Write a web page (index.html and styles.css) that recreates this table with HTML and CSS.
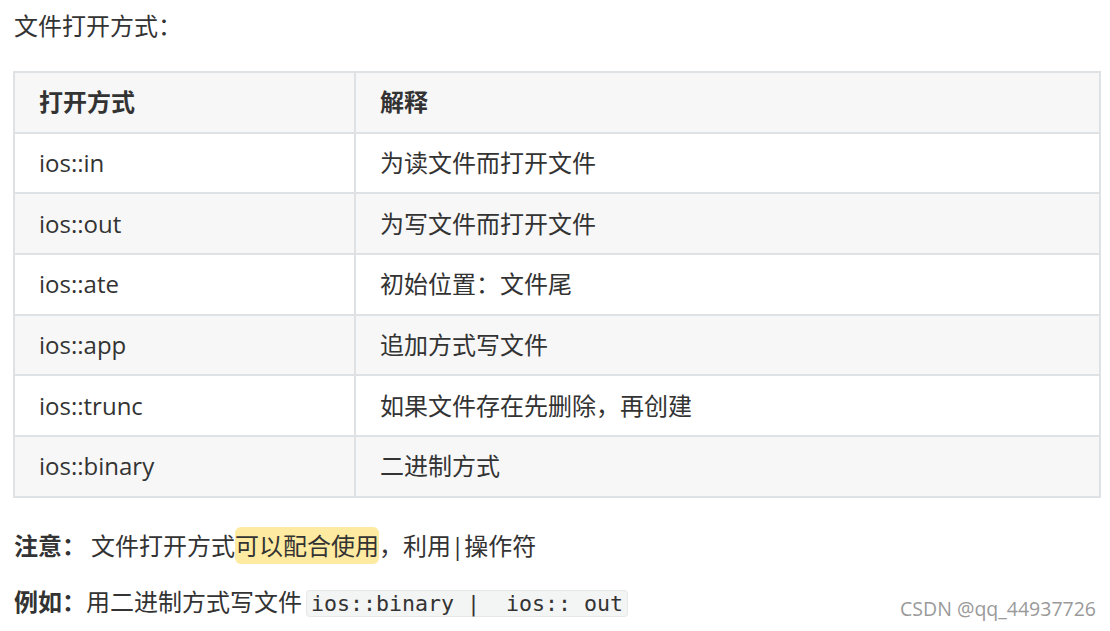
FILE: index.html
```html
<!DOCTYPE html>
<html lang="zh-CN">
<head>
<meta charset="utf-8">
<title>文件打开方式</title>
<link rel="stylesheet" href="styles.css">
</head>
<body>
<div class="article">
  <p class="intro">文件打开方式：</p>
  <table class="modes">
    <thead>
      <tr><th class="c1">打开方式</th><th class="c2">解释</th></tr>
    </thead>
    <tbody>
      <tr><td>ios::in</td><td>为读文件而打开文件</td></tr>
      <tr class="alt"><td>ios::out</td><td>为写文件而打开文件</td></tr>
      <tr><td>ios::ate</td><td>初始位置：文件尾</td></tr>
      <tr class="alt"><td>ios::app</td><td>追加方式写文件</td></tr>
      <tr><td>ios::trunc</td><td>如果文件存在先删除，再创建</td></tr>
      <tr class="alt"><td>ios::binary</td><td>二进制方式</td></tr>
    </tbody>
  </table>
  <p class="note"><strong>注意：</strong><span class="gap"> </span>文件打开方式<mark class="hl">可以配合使用</mark>，利用|操作符</p>
  <p class="note"><strong>例如：</strong>用二进制方式写文件<code class="inline">ios::binary |  ios:: out</code></p>
  <div class="watermark">CSDN @qq_44937726</div>
</div>
</body>
</html>
```
FILE: styles.css
```css
html, body {
  margin: 0;
  padding: 0;
  background: #ffffff;
}

body {
  font-family: "Open Sans", "Noto Sans CJK SC", sans-serif;
  font-size: 24px;
  color: #333333;
}

.article {
  position: relative;
  width: 1110px;
  height: 631px;
  box-sizing: border-box;
  padding: 8px 9px 0 14px;
}

.intro {
  margin: 0 0 27px 0;
  line-height: 36px;
}

.modes {
  margin-left: -1px;
  width: 1088px;
  border-collapse: separate;
  border-spacing: 0;
  border-left: 2px solid #dfe2e5;
  border-top: 2px solid #dfe2e5;
  table-layout: fixed;
  margin-bottom: 30px;
}

.modes th,
.modes td {
  text-align: left;
  line-height: 36px;
  padding: 11.33px 24px;
  border-right: 2px solid #dfe2e5;
  border-bottom: 2px solid #dfe2e5;
  white-space: nowrap;
}

.modes th {
  font-weight: 700;
  background: #f7f7f7;
}

.modes .c1 {
  width: 291px;
}

.modes tr.alt td {
  background: #f7f7f7;
}

.note {
  margin: 0 0 20px 0;
  line-height: 36px;
}

.note strong {
  font-weight: 700;
}

.gap {
  display: inline-block;
  width: 5px;
}

.hl {
  background: #feeaa0;
  color: #333333;
  border-radius: 6px;
  padding: 2px 0;
}

.inline {
  font-family: "DejaVu Sans Mono", "Liberation Mono", monospace;
  font-size: 21.6px;
  line-height: 24px;
  white-space: pre;
  background: #f3f4f4;
  border: 1px solid #e6e8ea;
  border-radius: 4px;
  padding: 0 4px;
  margin-left: 4px;
  color: #333333;
}

.watermark {
  position: absolute;
  right: 14px;
  bottom: 10px;
  font-size: 19.5px;
  line-height: 24px;
  color: #9a9a9a;
  font-family: "Open Sans", sans-serif;
}
```
